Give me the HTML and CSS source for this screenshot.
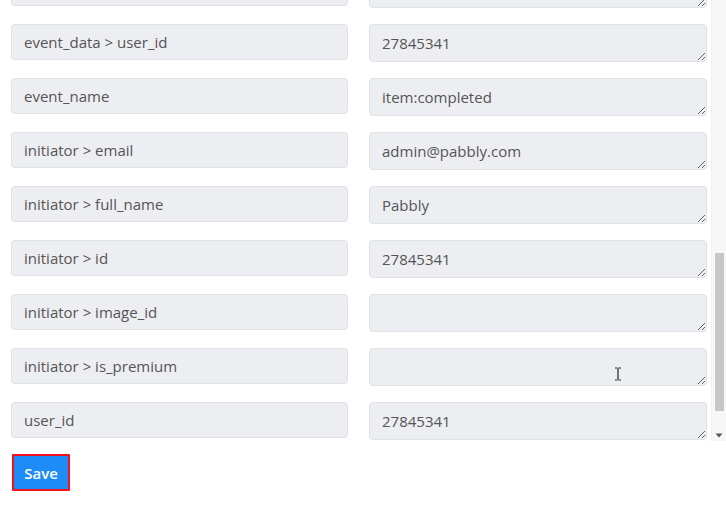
FILE: index.html
```html
<!DOCTYPE html>
<html lang="en">
<head>
  <meta charset="UTF-8">
  <meta name="viewport" content="width=device-width, initial-scale=1.0">
  <title>Map Response Fields</title>
  <link rel="stylesheet" href="styles.css">
</head>
<body>
  <div class="panel">
    <div class="fields" id="fields">
      <div class="row"><input class="key" value="event_data > id" readonly><textarea class="val">27845341</textarea></div>
      <div class="row"><input class="key" value="event_data > name" readonly><textarea class="val">Task</textarea></div>
      <div class="row"><input class="key" value="event_data > project_id" readonly><textarea class="val">413</textarea></div>
      <div class="row"><input class="key" value="event_data > status" readonly><textarea class="val">completed</textarea></div>
      <div class="row"><input class="key" value="event_data > type" readonly><textarea class="val">item</textarea></div>
      <div class="row"><input class="key" value="event_data > parent_id" readonly><textarea class="val"></textarea></div>
      <div class="row"><input class="key" value="event_data > created_at" readonly><textarea class="val"></textarea></div>
      <div class="row"><input class="key" value="event_data > updated_at" readonly><textarea class="val"></textarea></div>
      <div class="row"><input class="key" value="event_data > due_date" readonly><textarea class="val"></textarea></div>
      <div class="row"><input class="key" value="event_data > owner_id" readonly><textarea class="val">27845341</textarea></div>
      <div class="row"><input class="key" value="event_data > team_id" readonly><textarea class="val"></textarea></div>
      <div class="row"><input class="key" value="event_data > title" readonly><textarea class="val">y</textarea></div>
      <div class="row"><input class="key" value="event_data > user_id" readonly><textarea class="val">27845341</textarea></div>
      <div class="row"><input class="key" value="event_name" readonly><textarea class="val">item:completed</textarea></div>
      <div class="row"><input class="key" value="initiator > email" readonly><textarea class="val">admin@pabbly.com</textarea></div>
      <div class="row"><input class="key" value="initiator > full_name" readonly><textarea class="val">Pabbly</textarea></div>
      <div class="row"><input class="key" value="initiator > id" readonly><textarea class="val">27845341</textarea></div>
      <div class="row"><input class="key" value="initiator > image_id" readonly><textarea class="val"></textarea></div>
      <div class="row"><input class="key" value="initiator > is_premium" readonly><textarea class="val"></textarea></div>
      <div class="row"><input class="key" value="user_id" readonly><textarea class="val">27845341</textarea></div>
    </div>
    <!-- scrollbar drawn by hand, the headless browser hides the native one -->
    <div class="scrollbar">
      <div class="thumb"></div>
      <svg class="arrow" width="8" height="5" viewBox="0 0 8 5"><path d="M0.5 0.5h7L4 4.5z" fill="#555"/></svg>
    </div>
  </div>

  <div class="actions">
    <button class="save">Save</button>
  </div>

  <svg class="cursor" width="8" height="14" viewBox="0 0 8 14">
    <path d="M1 1h2.5M4.5 1H7M4 1.5v11M1 13h2.5M4.5 13H7" stroke="#222" stroke-width="1.2" fill="none"/>
  </svg>

  <script>
    document.addEventListener('DOMContentLoaded', function() {
      const fields = document.getElementById('fields');
      // show the end of the list, as in the mapping step
      fields.scrollTop = 640;
    });
  </script>
</body>
</html>
```

FILE: styles.css
```css
body {
  margin: 0;
  background: #fff;
  font-family: "Open Sans", Arial, sans-serif;
  color: #555;
}
.panel {
  display: flex;
  height: 441px;
}
.fields {
  flex: 1;
  overflow: hidden;
  padding: 16px 0 70px 11px;
  box-sizing: border-box;
}
.scrollbar {
  width: 14px;
  background: #f7f7f7;
  border-left: 1px solid #f0f0f0;
  display: flex;
  flex-direction: column;
  align-items: center;
}
.thumb {
  width: 9px;
  height: 158px;
  margin-top: 253px;
  background: #c6c6c6;
}
.arrow {
  margin-top: auto;
  margin-bottom: 3px;
}
.row {
  display: grid;
  grid-template-columns: 337px 338px;
  column-gap: 21px;
  margin-bottom: 16px;
  align-items: start;
}
.key,
.val {
  font-family: inherit;
  font-size: 15px;
  color: #555;
  background: #edeef2;
  border: 1px solid #dfe1e6;
  border-radius: 4px;
  box-sizing: border-box;
  padding: 0 12px;
  outline: none;
}
.key {
  height: 36px;
}
.val {
  height: 38px;
  padding: 8px 12px;
  line-height: 20px;
  resize: vertical;
  overflow: hidden;
}
.actions {
  padding: 13px 12px;
}
.save {
  font-family: inherit;
  font-size: 15px;
  font-weight: 600;
  color: #fff;
  background: #1d8cf8;
  border: 2px solid #f4111b;
  border-radius: 1px;
  width: 58px;
  height: 37px;
  padding: 0;
  cursor: pointer;
}
.cursor {
  position: absolute;
  left: 614px;
  top: 367px;
}
```
